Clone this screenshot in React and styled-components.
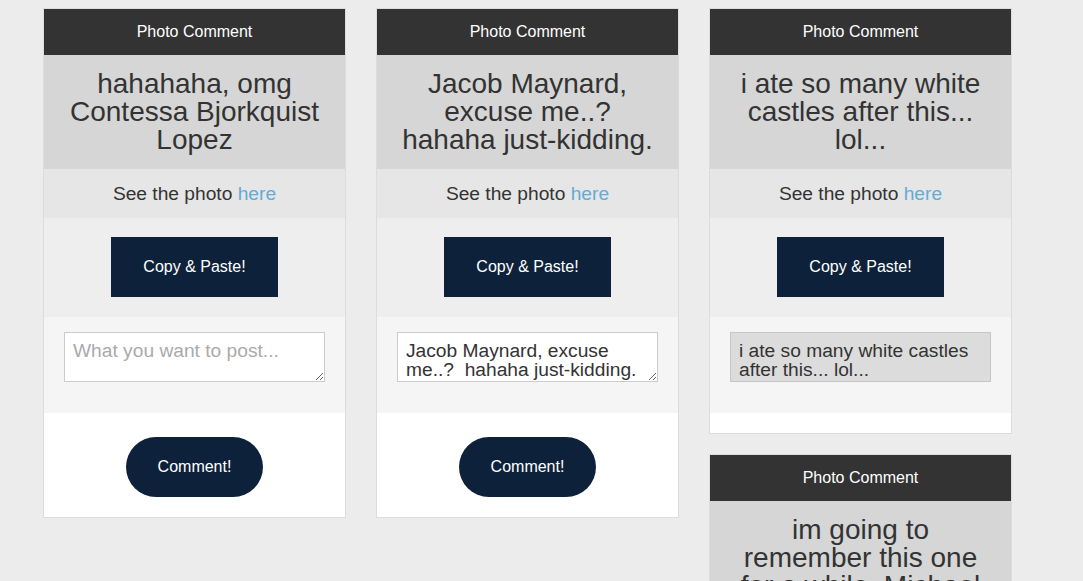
import React from 'react'
import styled, { createGlobalStyle } from 'styled-components'

const GlobalStyle = createGlobalStyle`
  html, body {
    margin: 0;
    overflow: hidden;
  }
  body {
    background: #ececec;
    font-family: "Liberation Sans", Arial, sans-serif;
    color: #333;
  }
`

const columns = [
  [
    { title: 'hahahaha, omg Contessa Bjorkquist Lopez', text: '', state: 'open' },
  ],
  [
    { title: 'Jacob Maynard, excuse me..? hahaha just-kidding.', text: 'Jacob Maynard, excuse me..?  hahaha just-kidding.', state: 'open' },
  ],
  [
    { title: 'i ate so many white castles after this... lol...', text: 'i ate so many white castles after this... lol...', state: 'done' },
    { title: 'im going to remember this one for a while. Michael', text: '', state: 'open' },
  ],
]

function CommentCard({ title, text, state }) {
  const done = state === 'done'
  return (
    <Card>
      <Header>Photo Comment</Header>
      <Title>{title}</Title>
      <SeePhoto>
        See the photo <a href="#">here</a>
      </SeePhoto>
      <CopyRow>
        <Button>Copy &amp; Paste!</Button>
      </CopyRow>
      <InputRow>
        <TextArea
          placeholder="What you want to post..."
          defaultValue={text}
          disabled={done}
        />
      </InputRow>
      <SubmitRow>
        {!done && <Button $round>Comment!</Button>}
      </SubmitRow>
    </Card>
  )
}

export default function App() {
  return (
    <>
      <GlobalStyle />
      <Board>
        {columns.map((col, i) => (
          <Column key={i}>
            {col.map((c, j) => (
              <CommentCard key={j} {...c} />
            ))}
          </Column>
        ))}
      </Board>
    </>
  )
}

const Board = styled.div`
  display: flex;
  align-items: flex-start;
  gap: 30px;
  padding: 8px 0 0 43px;
`

const Column = styled.div`
  display: flex;
  flex-direction: column;
  gap: 20px;
  width: 303px;
`

const Card = styled.div`
  border: 1px solid #dcdcdc;
  background: #fff;
  display: flex;
  flex-direction: column;
`

const Header = styled.div`
  background: #333;
  color: #fff;
  font-size: 16px;
  line-height: 18px;
  text-align: center;
  padding: 14px 0;
`

const Title = styled.div`
  background: #d6d6d6;
  font-size: 28px;
  line-height: 28px;
  text-align: center;
  padding: 15px 20px;
`

const SeePhoto = styled.div`
  background: #e6e6e6;
  font-size: 19.2px;
  line-height: 22px;
  text-align: center;
  padding: 14px 0 13px;

  a {
    color: #62acd6;
    text-decoration: none;
  }
`

const CopyRow = styled.div`
  background: #eeeeee;
  display: flex;
  justify-content: center;
  padding: 19px 0 20px;
`

const InputRow = styled.div`
  background: #f5f5f5;
  padding: 15px 20px 31px;
`

const TextArea = styled.textarea`
  display: block;
  box-sizing: border-box;
  width: 261px;
  height: 50px;
  margin: 0;
  padding: 8px 8px 6px;
  border: 1px solid #cccccc;
  background: #fff;
  color: #333;
  font-family: "Liberation Sans", Arial, sans-serif;
  font-size: 19.2px;
  line-height: 19px;
  overflow: hidden;

  &::placeholder {
    color: #aaaaaa;
  }

  &:disabled {
    background: #dcdcdc;
    border-color: #c6c6c6;
    color: #333;
    resize: none;
  }
`

const SubmitRow = styled.div`
  background: #fff;
  display: flex;
  justify-content: center;
  padding: 0 0 20px;
`

const Button = styled.button`
  height: 60px;
  padding: 0 32px;
  margin-top: ${(p) => (p.$round ? '24px' : '0')};
  border: none;
  border-radius: ${(p) => (p.$round ? '30px' : '0')};
  background: #0d223a;
  color: #fff;
  font-family: "Liberation Sans", Arial, sans-serif;
  font-size: 16px;
  cursor: pointer;
`
